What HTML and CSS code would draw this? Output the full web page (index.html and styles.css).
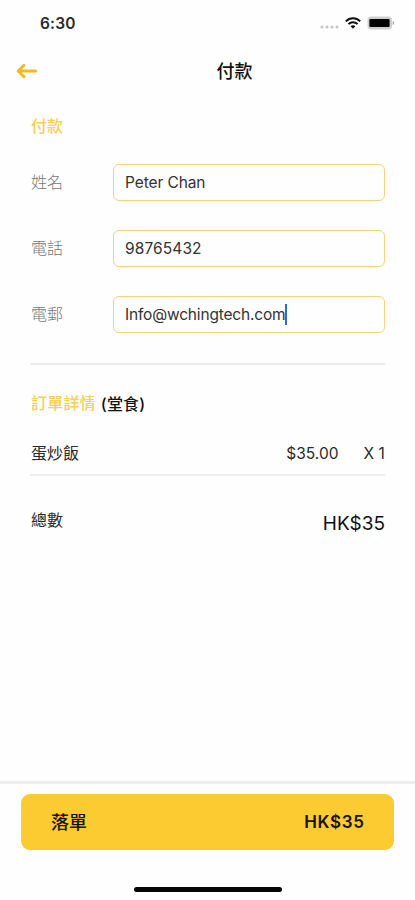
FILE: index.html
```html
<!DOCTYPE html>
<html lang="zh-Hant">
<head>
<meta charset="utf-8">
<meta name="viewport" content="width=device-width, initial-scale=1">
<title>付款</title>
<link rel="stylesheet" href="styles.css">
</head>
<body>
<div class="screen">
  <div class="status">
    <span class="time">6:30</span>
    <div class="indicators">
      <svg class="dots" width="19" height="4" viewBox="0 0 19 4" fill="#c4c4c4"><circle cx="2" cy="2" r="1.5"/><circle cx="7" cy="2" r="1.5"/><circle cx="12" cy="2" r="1.5"/><circle cx="17" cy="2" r="1.5"/></svg>
      <svg class="wifi" width="16" height="12" viewBox="0 0 16 12" fill="none" stroke="#111" stroke-width="2"><path d="M.8 4.4C4.8.2 11.2.2 15.2 4.4"/><path d="M3.4 7.1c2.6-2.6 6.6-2.6 9.2 0"/><path d="M5.6 9.2C7 7.9 9 7.9 10.4 9.2L8 11.7z" fill="#111" stroke="none"/></svg>
      <svg class="battery" width="28" height="14" viewBox="0 0 28 14"><rect x=".5" y=".5" width="24.5" height="13" rx="3.5" fill="#cfcfcf"/><path d="M25.7 5c2 .6 2 3.400 0 4z" fill="#aaa"/><rect x="2.400" y="3" width="20.200" height="8" rx="1" fill="#050505"/></svg>
    </div>
  </div>
  <header class="nav">
    <svg class="back" width="22" height="16" viewBox="0 0 22 16" fill="none" stroke="#f8b91c" stroke-width="3" stroke-linecap="round" stroke-linejoin="round"><path d="M19.800 8H2.600M8 2.300 2.200 8l5.800 5.700"/></svg>
    <h1>付款</h1>
  </header>
  <main>
    <h2 class="heading">付款</h2>
    <div class="field"><span class="label">姓名</span><div class="input name">Peter Chan</div></div>
    <div class="field"><span class="label">電話</span><div class="input phone">98765432</div></div>
    <div class="field"><span class="label">電郵</span><div class="input email">Info@wchingtech.com<i class="caret"></i></div></div>
    <section class="order">
      <h2 class="order-title"><span class="accent">訂單詳情</span><span class="mode">(堂食)</span></h2>
      <div class="item"><span class="dish">蛋炒飯</span><span class="price">$35.00</span><span class="qty">X 1</span></div>
      <div class="total"><span class="total-label">總數</span><span class="amount">HK$35</span></div>
    </section>
  </main>
  <footer>
    <div class="submit"><span class="submit-label">落單</span><span class="submit-price">HK$35</span></div>
    <div class="home"></div>
  </footer>
</div>
</body>
</html>
```
FILE: styles.css
```css
* { box-sizing: border-box; }
body {
  margin: 0;
  background: #fefefe;
  color: #2a2a2a;
  font-family: Inter, "Noto Sans CJK TC", sans-serif;
}
h1, h2 { margin: 0; }
.screen { height: 900px; display: flex; flex-direction: column; overflow: hidden; }
.status { height: 46px; padding: 0 20px 0 40px; display: flex; align-items: center; justify-content: space-between; }
.time { font-size: 15.5px; font-weight: 600; letter-spacing: .2px; }
.indicators { display: flex; align-items: center; }
.dots { margin: 8px 6px 0 0; }
.wifi { margin-right: 6px; }
.nav { height: 50px; padding: 0 16px; display: grid; grid-template-columns: 22px 1fr 22px; align-items: center; }
.nav h1 { font-size: 18px; font-weight: 500; line-height: 24px; text-align: center; color: #111; padding: 2px 0 0 54px; }
main { flex: 1; padding: 0 30px; display: flex; flex-direction: column; }
.heading { height: 68px; padding: 18px 0 0 1px; font-size: 16px; line-height: 24px; font-weight: 500; color: #fccd59; }
.field { height: 37px; margin-bottom: 29px; display: flex; align-items: center; }
.label { width: 83px; padding: 0 0 1px 1px; font-size: 16px; line-height: 24px; font-weight: 300; color: #777; }
.input {
  flex: 1; height: 37px; padding: 0 11px;
  display: flex; align-items: center;
  border: 1px solid #f8d17a; border-radius: 6px;
  font-size: 15.500px; color: #333; white-space: nowrap;
}
.name { letter-spacing: -.1px; }
.phone { letter-spacing: .1px; }
.email { letter-spacing: -.18px; }
.caret { width: 2px; height: 21px; background: #3b63dc; }
.order { border-top: 2px solid #ebebeb; margin-top: 1px; }
.order-title { height: 68px; padding: 26px 0 0 1px; display: flex; gap: 5px; font-size: 16px; line-height: 24px; }
.accent { font-weight: 500; color: #fccd59; letter-spacing: .2px; }
.mode { font-weight: 500; font-size: 16px; color: #111; padding-top: 1px; letter-spacing: .2px; }
.item { height: 43px; padding-top: 8px; display: flex; border-bottom: 2px solid #eee; font-size: 15.500px; line-height: 24px; }
.dish { flex: 1; font-size: 16px; padding-left: 1px; }
.price { margin-right: 25px; padding-top: 1px; }
.qty { padding-top: 1px; letter-spacing: .1px; }
.total { display: flex; justify-content: space-between; padding-top: 32px; }
.total-label { font-size: 16px; line-height: 24px; padding-left: 1px; }
.amount { font-size: 19px; line-height: 32px; color: #111; }
footer { height: 119px; border-top: 3px solid #eee; padding: 10px 21px 0; }
.submit {
  height: 56px; padding: 0 30px; border-radius: 9px;
  display: flex; align-items: center; justify-content: space-between;
  background: #fbcb31; color: #171204; font-weight: 600;
}
.submit-label { font-size: 18px; font-weight: 500; line-height: 26px; padding-top: 2px; }
.submit-price { font-size: 17px; letter-spacing: .7px; margin-right: -.7px; }
.home { width: 148px; height: 5px; margin: 37px auto 0; border-radius: 3px; background: #050505; }
```
